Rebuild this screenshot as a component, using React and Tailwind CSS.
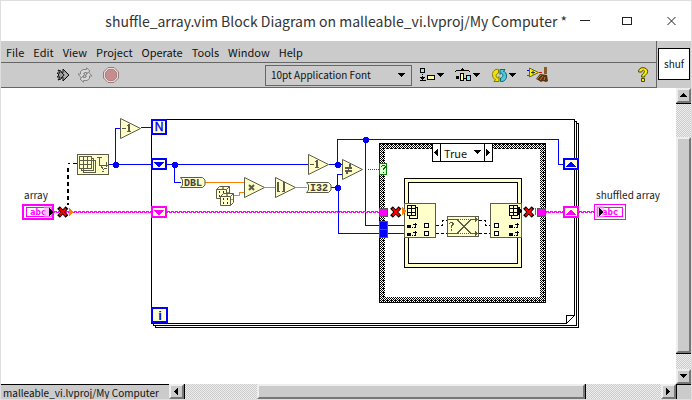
import { useState } from "react";

const menus = [
  "File",
  "Edit",
  "View",
  "Project",
  "Operate",
  "Tools",
  "Window",
  "Help",
];

const track =
  "bg-[repeating-conic-gradient(#cbcbcb_0_25%,#eeeeee_0_50%)] bg-[length:2px_2px]";
const raised =
  "bg-[#cbcbcb] border-2 border-t-[#eeeeee] border-l-[#eeeeee] border-r-[#777777] border-b-[#777777]";

const Arrow = ({ dir }) => {
  const shapes = {
    up: "M4 2h1v1h1v1h1v1h1v1H1V5h1V4h1V3h1z",
    down: "M1 2h7v1H7v1H6v1H5v1H4V5H3V4H2V3H1z",
    left: "M6 1v7H5V7H4V6H3V5H2V4h1V3h1V2h1V1z",
    right: "M2 1v7h1V7h1V6h1V5h1V4H5V3H4V2H3V1z",
  };
  return (
    <svg
      width="9"
      height="9"
      viewBox="0 0 9 9"
      shapeRendering="crispEdges"
      className="shrink-0">
      <path d={shapes[dir]} />
    </svg>
  );
};

const TitleBar = () => (
  <header className="flex items-center h-10 shrink-0 bg-white text-[#333333]">
    <h1 className="flex-1 text-right text-sm whitespace-nowrap">
      shuffle_array.vim Block Diagram on malleable_vi.lvproj/My Computer *
    </h1>
    <button aria-label="Minimize" className="w-9 h-full flex items-center justify-center">
      <svg width="11" height="11" stroke="#222" fill="none" shapeRendering="crispEdges">
        <path d="M0 4.5h10" />
      </svg>
    </button>
    <button aria-label="Maximize" className="w-12 h-full flex items-center justify-center">
      <svg width="11" height="11" stroke="#222" fill="none" shapeRendering="crispEdges">
        <path d="M.5 1.5h9v7h-9z" />
      </svg>
    </button>
    <button aria-label="Close" className="w-10 h-full flex items-center justify-center">
      <svg width="11" height="11" stroke="#222" fill="none">
        <path d="M1.5 1l8 8M9.5 1l-8 8" />
      </svg>
    </button>
  </header>
);

const RunIcon = () => (
  <svg width="15" height="16" viewBox="0 0 15 16">
    <path
      d="M1 6h3L2 3l3 1 1 2h1V2l6 6-6 6v-4H6l-1 2-3 1 2-3H1l2-2z"
      fill="#999"
      stroke="#111"
    />
    <path d="M5 5l3 3-3 3" stroke="#222" fill="none" />
    <path d="M8 5.5l2.5 2.5L8 10.5" stroke="#ccc" fill="none" />
  </svg>
);

const RunContinuouslyIcon = () => (
  <svg width="16" height="16" viewBox="0 0 16 16" fill="#d8d8d8" stroke="#858585">
    <path d="M3.5 7V4.5L6 2.5h3.5V.8L13 4l-3.5 3V5.5H7.5L6.5 7H8L4.5 11 1 7z" />
    <path d="M12.5 9v2.5L10 13.5H6.5v1.7L3 12l3.5-3v1.5h2L9.5 9H8l3.5-4L15 9z" />
  </svg>
);

const AbortIcon = () => (
  <svg width="16" height="16" viewBox="0 0 16 16">
    <path d="M5 .5h6L15.5 5v6L11 15.5H5L.5 11V5z" fill="#e6dede" stroke="#8f7f7f" />
    <path d="M5.5 2.5h5l3 3v5l-3 3h-5l-3-3v-5z" fill="#c58d8d" stroke="#b57c7c" />
  </svg>
);

const AlignIcon = () => (
  <svg width="16" height="14" viewBox="0 0 16 14" shapeRendering="crispEdges">
    <path d="M.5.5h4v4h-4z" fill="#80e8f8" stroke="#000" />
    <path d="M7.5 7.5h7v4h-7z" fill="#ffffa0" stroke="#000" />
    <path d="M2 6h1v1H2zM2 8h1v1H2zM0 9h5v1H4v1H3v1H2v-1H1v-1H0zM0 12h6v1H0z" />
  </svg>
);

const DistributeIcon = () => (
  <svg width="17" height="14" viewBox="0 0 17 14" shapeRendering="crispEdges">
    <path d="M0 3h1V2h5V1h1V0h1v1h1v1h5v1h1v1h-1V3H1v1H0z" />
    <path d="M5.5 5.5h3v7h-3z" fill="#ffffa0" stroke="#000" />
    <path d="M11.5 7.5h4v5h-4z" fill="#80e8f8" stroke="#000" />
    <path d="M1 8h3v3H1zM9 10h2v1H9z" />
  </svg>
);

const ReorderIcon = () => (
  <svg width="17" height="15" viewBox="0 0 17 15">
    <path
      d="M7.5 1.5C4 .5 1.5 3.5 1.5 6.5S3 11 4.5 11.5L3 13.5h5V8.5L6.5 10C4.5 9 4.5 5.5 7.5 5z"
      fill="#f2e500"
      stroke="#807800"
    />
    <path
      d="M9.5 13.5c4 .5 6-2.5 6-5.5S14 3.5 12.5 3.5L14 1.5H9v5L10.5 5c2 1 2 4.5-1 5z"
      fill="#55c9d8"
      stroke="#0b6978"
    />
  </svg>
);

const CleanUpIcon = () => (
  <svg width="22" height="16" viewBox="0 0 22 16">
    <path d="M0 3.5h4" stroke="#00f" />
    <path d="M0 8.5h4" stroke="#f00" />
    <path d="M2.5 1l9 4.5-9 4.5z" fill="#fff200" stroke="#6a6a10" />
    <path d="M4 5.5h4M6 3.5v4" stroke="#333" />
    <path d="M12 5.5h3" stroke="#f00" />
    <path d="M17 0h3v7h-3z" fill="#8a5a28" />
    <path d="M13 7l7 1 1 6-2 1-3-1-2 1-3-2-2-1z" fill="#5a3210" />
    <path d="M10 12l4-4M13 13l3-4M17 13l1-3" stroke="#b87a38" />
  </svg>
);

const HelpIcon = () => (
  <svg width="13" height="16" viewBox="0 0 13 16">
    <path
      d="M1.5 5C1.5 2 3.5.7 6 .7s4.7 1.5 4.7 4c0 2.5-3.2 3-3.2 5.3h-3c0-3.5 3-3.5 3-5.3 0-2-2.7-2-2.7.3zM4.5 11.5h3v3h-3z"
      fill="#ffec00"
      stroke="#4d4800"
    />
  </svg>
);

const ToolButton = ({ label, menu, children }) => (
  <button aria-label={label} className="flex items-center">
    {children}
    {menu && <Arrow dir="down" />}
  </button>
);

const Toolbar = () => {
  const [font, setFont] = useState("10pt Application Font");

  return (
    <div className="flex items-center h-[25px] border-b border-[#666666] pr-1.5">
      <div className="flex items-center gap-1.5 pl-[55px]">
        <ToolButton label="Run">
          <RunIcon />
        </ToolButton>
        <ToolButton label="Run continuously">
          <RunContinuouslyIcon />
        </ToolButton>
        <span className="pl-1 flex">
          <ToolButton label="Abort">
            <AbortIcon />
          </ToolButton>
        </span>
      </div>
      <div className="relative ml-auto">
        <select
          aria-label="Text settings"
          className="appearance-none block w-[147px] h-[21px] pl-[5px] border border-[#666666] text-[10px] leading-4"
          value={font}
          onChange={(e) => setFont(e.target.value)}>
          <option>10pt Application Font</option>
        </select>
        <span className="absolute right-1.5 top-1.5 pointer-events-none">
          <Arrow dir="down" />
        </span>
      </div>
      <div className="flex items-center gap-2.5 pl-2">
        <ToolButton label="Align objects" menu>
          <AlignIcon />
        </ToolButton>
        <ToolButton label="Distribute objects" menu>
          <DistributeIcon />
        </ToolButton>
        <ToolButton label="Reorder" menu>
          <ReorderIcon />
        </ToolButton>
        <ToolButton label="Clean up diagram">
          <CleanUpIcon />
        </ToolButton>
      </div>
      <span className="pl-[88px] flex">
        <ToolButton label="Help">
          <HelpIcon />
        </ToolButton>
      </span>
    </div>
  );
};

const BLUE = "#0000ff";
const PINK = "#ff00ff";
const ORANGE = "#ff8000";
const CREAM = "#ffffcc";
const OLIVE = "#5c5c48";

const Wire = ({ d, color = BLUE, dash }) => (
  <path d={d} fill="none" stroke={color} strokeDasharray={dash} />
);

// string wires are two rows of dashes, half a period apart
const StringWire = ({ x1, x2 }) => (
  <>
    <Wire d={`M${x1} 211.5H${x2}`} color={PINK} dash="3 1" />
    <path
      d={`M${x1} 212.5H${x2}`}
      stroke={PINK}
      strokeDasharray="3 1"
      strokeDashoffset="2"
    />
  </>
);

const Dot = ({ x, y }) => (
  <path
    d={`M${x - 1} ${y - 2}h4v1h1v4h-1v1h-4v-1h-1v-4h1z`}
    fill={BLUE}
  />
);

const Node = ({ x, y, w, h }) => (
  <rect x={x + 0.5} y={y + 0.5} width={w - 1} height={h - 1} fill={CREAM} stroke={OLIVE} />
);

const Triangle = ({ x, y, children }) => (
  <g transform={`translate(${x} ${y})`}>
    <path
      d="M.5.5v20l20-10z"
      fill={CREAM}
      stroke={OLIVE}
      shapeRendering="auto"
    />
    {children}
  </g>
);

const Decrement = ({ x, y }) => (
  <Triangle x={x} y={y}>
    <path d="M2 10h4v1H2zM8 6h2v7h1v1H7v-1h1V8H7V7h1z" fill={OLIVE} />
  </Triangle>
);

const ShiftRegister = ({ x, y, color, up }) => (
  <g transform={`translate(${x} ${y})`}>
    <rect x="1" y="1" width="14" height="10" fill={CREAM} stroke={color} strokeWidth="2" />
    <path
      d={
        up
          ? "M3 9V8h1V7h1V6h1V5h1V4h2v1h1v1h1v1h1v1h1v1z"
          : "M3 4v1h1v1h1v1h1v1h1v1h2V8h1V7h1V6h1V5h1V4z"
      }
      fill={color}
    />
  </g>
);

const BrokenMark = ({ x, y }) => (
  <g transform={`translate(${x} ${y})`} fill="none" shapeRendering="auto">
    <path d="M.5.5l8.500 9M9 .5l-8.500 9" stroke="#000" strokeWidth="3.800" />
    <path d="M1.5 1.5l6.500 7M8 1.5l-6.500 7" stroke="#f00" strokeWidth="2" />
  </g>
);

const Grid = ({ x, y }) => (
  <g transform={`translate(${x} ${y})`} fill={CREAM} stroke="#000">
    <path d="M2.5 2.5h8v11h-8z" />
    <path d="M.5.5h8v10h-8zM.5 3.5h8M.5 7.5h8M4.5.5v10" />
  </g>
);

const IndexRow = ({ x, y }) => (
  <path
    d={`M${x} ${y + 1}h4v3h-4zM${x + 5} ${y + 3}h1v1h-1zM${x + 7} ${y + 3}h1v-4h1v5h-2zM${x + 6} ${y}h4v1h-4z`}
    fill="#000"
  />
);

const Element = ({ x, y }) => (
  <rect x={x + 0.5} y={y + 0.5} width="4" height="4" fill="#fff" stroke="#000" />
);

const Conversion = ({ x, y, label }) => (
  <g transform={`translate(${x} ${y})`}>
    <path
      d="M.5.5h22l2.5 2.5v5l-2.5 2.5H.5l2-2.5V3z"
      fill={CREAM}
      stroke={OLIVE}
      shapeRendering="auto"
    />
    <text
      x="13"
      y="9"
      fontSize="10"
      textAnchor="middle"
      fill="#44443a"
      className="font-['Liberation_Mono',monospace] font-bold">
      {label}
    </text>
  </g>
);

const Die = ({ x, y }) => (
  <g
    transform={`translate(${x} ${y})`}
    fill={CREAM}
    stroke={OLIVE}
    strokeLinejoin="round"
    shapeRendering="auto">
    <path d="M.5 3.5l3-3h10v9l-3 3H.5z" />
    <path d="M.5 3.5h10v9M10.5 3.5l3-3" fill="none" />
    <path
      d="M3 5h1v2H3zM7 9h1v2H7zM7 5h1v2H7zM3 9h1v2H3zM6 1.5h2v1H6zM11.5 6h1v1h-1z"
      fill="#33332a"
      stroke="none"
    />
  </g>
);

const Diagram = () => (
  <svg
    width="675"
    height="296"
    viewBox="1 88 675 296"
    shapeRendering="crispEdges"
    className="block"
    role="img"
    aria-label="Block diagram">
    <defs>
      <pattern id="weave" width="4" height="4" patternUnits="userSpaceOnUse">
        <path d="M0 0h1v1H0zM2 0h2v1H2zM1 1h1v1H1zM3 1h1v1H3zM0 2h1v1H0zM2 2h1v1H2zM1 3h1v1H1zM3 3h1v1H3z" />
      </pattern>
    </defs>

    {/* for loop */}
    <g fill="#fff" stroke="#000">
      <path d="M155.5 123.5h423v204h-423z" />
      <path d="M153.5 121.5h423v204h-423z" />
      <path d="M151.5 119.5h423v196h-8v8h-415z" />
      <path d="M566.5 323.5l8-8" shapeRendering="auto" />
    </g>

    {/* array size and decrement outside the loop */}
    <Wire d="M77 163.5H68" color="#000" dash="4 3" />
    <path d="M68 168V205" stroke="#000" strokeWidth="2" strokeDasharray="4 3" />
    <Wire d="M109 164.5H152M115.5 164V128.5H120M141 127.5H152" />
    <Node x={77} y={154} w={32} h={21} />
    <g fill={CREAM} stroke={OLIVE}>
      <path d="M83.5 160.5h12v12h-12zM81.5 158.5h12v12h-12z" />
      <path d="M79.5 156.5h12v12h-12zM79.5 160.5h12M79.5 164.5h12M83.5 156.5v12M87.5 156.5v12" />
      <path d="M99.5 157v8h8M97 157.5h5M106.5 162v5M99.5 164.5l5 6" fill="none" />
      <path d="M102 171.5h2M104 168.5h3" fill="none" />
    </g>
    <Decrement x={120} y={118} />
    <Dot x={115} y={164} />

    {/* wires inside the loop */}
    <Wire d="M167 164.5H308M174.5 164V182.5H181M329 164.5H342M331 187.5H338M342 174.5H337.5V188" />
    <Wire d="M337.5 165V139.5H558.5V164.5H563M365.5 140V225.5H405M338.5 188V233.5H405" />
    <Wire
      d="M205 182.5H244M234 195.5H239.5V192.5H244M265 187.5H275M296 187.5H307"
      color={ORANGE}
    />
    <StringWire x1={54} x2={151} />
    <StringWire x1={167} x2={380} />
    <StringWire x1={546} x2={563} />
    <StringWire x1={579} x2={594} />
    <Dot x={174} y={164} />
    <Dot x={337} y={164} />
    <Dot x={337} y={187} />
    <Dot x={365} y={139} />

    <Conversion x={180} y={177} label="DBL" />
    <Conversion x={306} y={182} label="I32" />
    <Die x={216} y={186} />
    <Die x={220} y={193} />
    <Triangle x={244} y={177}>
      <path d="M5 8l5 5M10 8l-5 5" stroke={OLIVE} strokeWidth="2" shapeRendering="auto" />
    </Triangle>
    <Triangle x={275} y={177}>
      <path d="M2 5h2v9h1v1H2zM8 5h2v10H7v-1h1z" fill={OLIVE} />
    </Triangle>
    <Decrement x={308} y={154} />
    <Triangle x={342} y={159}>
      <path d="M3 8h7v2H3zM3 11h7v2H3zM7 5h2v3H7zM6 10h1v1H6zM4 13h2v2H4z" fill={OLIVE} />
    </Triangle>

    {/* case structure */}
    <path d="M379 143h167v160H379zM385 149v148h155V149z" fill="#fff" fillRule="evenodd" />
    <path d="M379 143h167v160H379zM385 149v148h155V149z" fill="url(#weave)" fillRule="evenodd" />
    <path d="M379.5 143.5h166v159h-166z" fill="none" stroke="#000" />
    <Wire d="M368 169.5H379" color="#007000" dash="1 1" />
    <rect x="379.5" y="163.5" width="7" height="11" fill="#ddffcc" stroke="#008000" />
    <path
      d="M381 166h1v-1h3v1h1v2h-1v1h-1v1h-1v-2h1v-1h1v-1h-3v1h-1zM383 172h1v1h-1z"
      fill="#007000"
    />
    <g stroke="#555">
      <rect x="379.5" y="208.5" width="8" height="8" fill={PINK} />
      <rect x="379.5" y="221.5" width="8" height="8" fill={BLUE} />
      <rect x="379.5" y="229.5" width="8" height="8" fill={BLUE} />
      <rect x="537.5" y="208.5" width="8" height="8" fill={PINK} />
    </g>

    {/* in place element structure */}
    <path d="M404.5 178.5h117v89h-117z" fill={CREAM} stroke="#000" />
    <path d="M408.5 182.5h109v81h-109z" fill="#fff" stroke="#000" />
    <Node x={404} y={203} w={32} h={35} />
    <Node x={490} y={203} w={32} h={35} />
    <Grid x={407} y={205} />
    <Grid x={509} y={205} />
    <IndexRow x={407} y={224} />
    <IndexRow x={407} y={232} />
    <IndexRow x={509} y={224} />
    <IndexRow x={509} y={232} />
    <Element x={424} y={223} />
    <Element x={424} y={231} />
    <Element x={494} y={223} />
    <Element x={494} y={231} />
    <Wire
      d="M436 225.5H442.5V220.5H447M436 233.5H447M479 220.5H485.5V225.5H490M479 233.5H490"
      color="#000"
      dash="3 2"
    />
    <Node x={447} y={216} w={32} h={21} />
    <g fill="none" stroke={OLIVE}>
      <path d="M448 219.5h9l14 14h7M448 233.5h9l14-14h7" />
      <path d="M458 219.5h12M458 233.5h12" strokeDasharray="1 1" />
      <path d="M475.5 217v5M476.5 218v3M475.5 231v5M476.5 232v3" />
    </g>
    <path
      d="M449 223h1v-1h3v1h1v2h-1v1h-1v2h-1v-3h1v-2h-2v1h-1zM451 229h1v2h-1z"
      fill={OLIVE}
    />

    <BrokenMark x={58} y={207} />
    <BrokenMark x={391} y={207} />
    <BrokenMark x={524} y={207} />
    <path d="M69 208l4 4-4 4zM402 207l5 4-5 4z" fill={ORANGE} />
    <path d="M518 207l5 4-5 4z" />
    <path d="M535 208h1v7h-1z" fill={PINK} />

    {/* loop terminals */}
    <g fill={CREAM} stroke={BLUE} strokeWidth="2">
      <rect x="152" y="120" width="14" height="14" />
      <rect x="152" y="308" width="15" height="14" />
    </g>
    <g fill={BLUE} className="font-['Liberation_Sans',sans-serif]">
      <text x="159" y="131" fontSize="12" textAnchor="middle" stroke={BLUE} strokeWidth=".4">
        N
      </text>
      <text x="160" y="320" fontSize="13" textAnchor="middle" className="font-bold">
        i
      </text>
    </g>
    <ShiftRegister x={151} y={158} color={BLUE} />
    <ShiftRegister x={151} y={206} color={PINK} />
    <ShiftRegister x={563} y={158} color={BLUE} up />
    <ShiftRegister x={563} y={206} color={PINK} up />

    {/* array control and indicator */}
    <rect x="23" y="205" width="30" height="14" fill="#fff" stroke={PINK} strokeWidth="2" />
    <rect x="26.5" y="207.5" width="25" height="9" fill="#fff" stroke={PINK} />
    <rect x="594.5" y="204.5" width="31" height="15" fill="#fff" stroke={PINK} />
    <rect x="597.5" y="207.5" width="25" height="9" fill="#fff" stroke={PINK} />
    <g fill={PINK} className="font-['DejaVu_Sans_Mono',monospace] font-bold" fontSize="9">
      <text x="30" y="215">abc</text>
      <text x="602" y="215">abc</text>
    </g>
    <path d="M44 206h8v12h-8zM596 206h8v12h-8z" fill="#ff99ff" fillOpacity=".6" />
    <path d="M49 208l4 4-4 4zM599 208l4 4-4 4z" />
    <g fontSize="10" fill="#222">
      <text x="24" y="199">array</text>
      <text x="596" y="199">shuffled array</text>
    </g>
  </svg>
);

const CaseSelector = () => {
  const [value, setValue] = useState("True");
  const toggle = () => setValue(value === "True" ? "False" : "True");

  return (
    <div className="absolute left-[431px] top-[55px] flex h-[19px] w-[61px] bg-white border border-black">
      <button
        aria-label="Previous case"
        onClick={toggle}
        className="w-2 flex items-center justify-center border-r border-black">
        <Arrow dir="left" />
      </button>
      <div className="relative flex-1">
        <select
          aria-label="Case"
          className="appearance-none block w-full h-full pl-[3px] text-[11px] leading-4"
          value={value}
          onChange={(e) => setValue(e.target.value)}>
          <option>True</option>
          <option>False</option>
        </select>
        <span className="absolute right-0.5 top-1 pointer-events-none">
          <Arrow dir="down" />
        </span>
      </div>
      <button
        aria-label="Next case"
        onClick={toggle}
        className="w-2 flex items-center justify-center border-l border-black">
        <Arrow dir="right" />
      </button>
    </div>
  );
};

const ScrollButton = ({ dir, label }) => (
  <button
    aria-label={label}
    className={`w-[15px] h-[15px] shrink-0 flex items-center justify-center ${raised}`}>
    <Arrow dir={dir} />
  </button>
);

const App = () => {
  return (
    <div className="h-screen flex flex-col overflow-hidden border border-[#dedede] bg-white text-[#111111] font-['Noto_Sans_CJK_SC',sans-serif]">
      <TitleBar />
      <div className="flex shrink-0 bg-[#cbcbcb]">
        <div className="flex-1 flex flex-col">
          <nav className="flex items-center gap-[9px] h-[22px] pl-[5px] border-b border-[#666666] text-[11px] leading-4">
            {menus.map((menu) => (
              <button key={menu}>{menu}</button>
            ))}
          </nav>
          <Toolbar />
        </div>
        <div className="w-[35px] border-l border-[#666666] pt-[7px] pl-px">
          <button className="w-8 h-8 bg-white border border-black text-[10px] leading-4">
            shuf
          </button>
        </div>
      </div>
      <main className="flex flex-1 min-h-0">
        <div className="relative flex-1 min-w-0 overflow-hidden">
          <Diagram />
          <CaseSelector />
        </div>
        <div className="flex flex-col w-[15px] shrink-0">
          <ScrollButton dir="up" label="Scroll up" />
          <div className={`grow-[34] border-t border-black ${track}`} />
          <div className={`grow-[218] ${raised}`} />
          <div className={`grow-[15] border-t border-black ${track}`} />
          <ScrollButton dir="down" label="Scroll down" />
        </div>
      </main>
      <footer className="flex h-[15px] shrink-0 bg-[#cbcbcb]">
        <span className="w-[168px] shrink-0 border-t border-black pl-0.5 text-[10px] leading-4 whitespace-nowrap">
          malleable_vi.lvproj/My Computer
        </span>
        <ScrollButton dir="left" label="Scroll left" />
        <div className={`grow-[73] border-l border-black ${track}`} />
        <div className={`grow-[328] ${raised}`} />
        <div className={`grow-[76] border-l border-black ${track}`} />
        <ScrollButton dir="right" label="Scroll right" />
        <span className="w-[15px] border-t border-l border-black" />
      </footer>
    </div>
  );
};

export default App;
